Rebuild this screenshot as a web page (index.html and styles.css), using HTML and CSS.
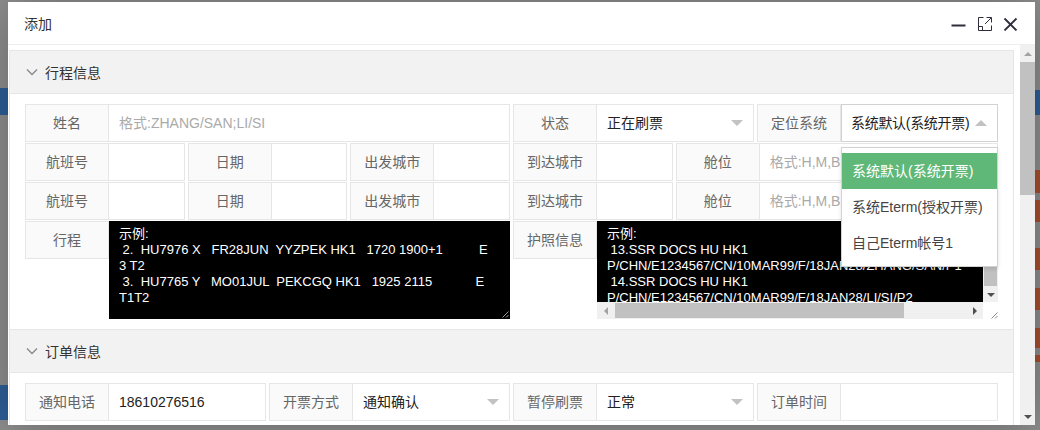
FILE: index.html
```html
<!DOCTYPE html>
<html lang="zh-CN">
<head>
<meta charset="UTF-8">
<title>添加</title>
<link rel="stylesheet" href="styles.css">
</head>
<body>
<!-- dimmed page behind the layer -->
<div class="backdrop">
  <i class="bg-bit blue" style="left:0;top:88px;height:27px"></i>
  <i class="bg-bit blue" style="left:0;top:385px;height:35px"></i>
  <i class="bg-bit blue" style="left:1035px;top:90px;height:25px"></i>
  <i class="bg-bit red" style="left:1035px;top:170px;height:23px"></i>
  <i class="bg-bit red" style="left:1035px;top:200px;height:22px"></i>
  <i class="bg-bit red" style="left:1035px;top:248px;height:22px"></i>
  <i class="bg-bit red" style="left:1035px;top:288px;height:22px"></i>
  <i class="bg-bit red" style="left:1035px;top:328px;height:20px"></i>
  <i class="bg-bit red" style="left:1035px;top:355px;height:7px"></i>
</div>

<div class="layer">
  <div class="layer-title">
    <span class="title-text">添加</span>
    <span class="layer-btns">
      <svg width="15" height="15" viewBox="0 0 15 15"><path d="M0.5 9.5H14.5" stroke="#2e2d3c" stroke-width="2" fill="none"/></svg>
      <svg width="15" height="15" viewBox="0 0 15 15" fill="none" stroke="#2e2d3c" stroke-width="1"><path d="M6.5 1.5H1.5V14.5H14.5V9.5"/><path d="M8 8L14 2M9.5 1.5H14.5V6.5"/><path d="M1.5 10.5H5.5V14.5"/></svg>
      <svg width="15" height="15" viewBox="0 0 15 15"><path d="M1.5 2.5L13.5 14.5M13.5 2.5L1.5 14.5" stroke="#2e2d3c" stroke-width="1.8" fill="none"/></svg>
    </span>
  </div>

  <div class="layer-body">
    <div class="layer-content">
      <div class="collapse">
        <div class="colla-item">
          <h2 class="colla-title"><svg class="chev" width="12" height="8" viewBox="0 0 12 8"><path d="M1 1.5L6 6.5L11 1.5" stroke="#888" stroke-width="1.3" fill="none"/></svg>行程信息</h2>
          <div class="colla-content">
            <div class="form-grid">
              <div class="field span6"><label>姓名</label><div class="input placeholder">格式:ZHANG/SAN;LI/SI</div></div>
              <div class="field span3"><label>状态</label><div class="input select">正在刷票<i class="edge"></i></div></div>
              <div class="field span3"><label>定位系统</label>
                <div class="input select open">系统默认(系统开票)<i class="edge up"></i>
                  <dl class="options">
                    <dd class="this">系统默认(系统开票)</dd>
                    <dd>系统Eterm(授权开票)</dd>
                    <dd>自己Eterm帐号1</dd>
                  </dl>
                </div>
              </div>

              <div class="field span2"><label>航班号</label><div class="input"></div></div>
              <div class="field span2"><label>日期</label><div class="input"></div></div>
              <div class="field span2"><label>出发城市</label><div class="input"></div></div>
              <div class="field span2"><label>到达城市</label><div class="input"></div></div>
              <div class="field span4"><label>舱位</label><div class="input placeholder">格式:H,M,B,Y</div></div>

              <div class="field span2"><label>航班号</label><div class="input"></div></div>
              <div class="field span2"><label>日期</label><div class="input"></div></div>
              <div class="field span2"><label>出发城市</label><div class="input"></div></div>
              <div class="field span2"><label>到达城市</label><div class="input"></div></div>
              <div class="field span4"><label>舱位</label><div class="input placeholder">格式:H,M,B,Y</div></div>

              <div class="field span6 tall"><label>行程</label>
                <div class="textarea">
                  <div class="ta-text">示例:
 2.  HU7976 X   FR28JUN  YYZPEK HK1   1720 1900+1          E
3 T2
 3.  HU7765 Y   MO01JUL  PEKCGQ HK1   1925 2115            E
T1T2</div>
                  <svg class="grip" width="8" height="8" viewBox="0 0 8 8"><path d="M7.5 1.5L1.5 7.5M7.5 5L5 7.5" stroke="#999" stroke-width="1"/></svg>
                </div>
              </div>
              <div class="field span6 tall"><label>护照信息</label>
                <div class="scrollbox">
                  <div class="sb-text">示例:
 13.SSR DOCS HU HK1
P/CHN/E1234567/CN/10MAR99/F/18JAN28/ZHANG/SAN/P1
 14.SSR DOCS HU HK1
P/CHN/E1234567/CN/10MAR99/F/18JAN28/LI/SI/P2</div>
                  <div class="sb-v">
                    <span class="sb-btn"><i class="arr arr-up off"></i></span>
                    <span class="sb-thumb-v"></span>
                    <span class="sb-track"></span>
                    <span class="sb-btn"><i class="arr arr-down"></i></span>
                  </div>
                  <div class="sb-h">
                    <span class="sb-btn"><i class="arr arr-left off"></i></span>
                    <span class="sb-thumb-h"></span>
                    <span class="sb-track"></span>
                    <span class="sb-btn"><i class="arr arr-right"></i></span>
                  </div>
                  <div class="sb-corner"><svg width="9" height="9" viewBox="0 0 9 9"><path d="M8.5 2.5L2.5 8.5M8.5 6L6 8.5" stroke="#888" stroke-width="1"/></svg></div>
                </div>
              </div>
            </div>
          </div>
        </div>

        <div class="colla-item">
          <h2 class="colla-title"><svg class="chev" width="12" height="8" viewBox="0 0 12 8"><path d="M1 1.5L6 6.5L11 1.5" stroke="#888" stroke-width="1.3" fill="none"/></svg>订单信息</h2>
          <div class="colla-content">
            <div class="form-grid">
              <div class="field span3"><label>通知电话</label><div class="input value">18610276516</div></div>
              <div class="field span3"><label>开票方式</label><div class="input select">通知确认<i class="edge"></i></div></div>
              <div class="field span3"><label>暂停刷票</label><div class="input select">正常<i class="edge"></i></div></div>
              <div class="field span3"><label>订单时间</label><div class="input"></div></div>
            </div>
          </div>
        </div>
      </div>
    </div>

    <div class="vscroll">
      <span class="sb-btn tall-btn"><i class="arr arr-up off"></i></span>
      <span class="page-thumb"></span>
      <span class="sb-track"></span>
      <span class="sb-btn tall-btn"><i class="arr arr-down"></i></span>
    </div>
  </div>
</div>
</body>
</html>
```

FILE: styles.css
```css
body {
  margin: 0;
  width: 1040px;
  height: 430px;
  overflow: hidden;
  position: relative;
  background-color: #8f8f8f; /* page under the shade */
  font-family: "Liberation Sans", "Noto Sans CJK SC", sans-serif;
  font-size: 14px;
  color: #333;
}

.backdrop {
  position: absolute;
  left: 0;
  top: 0;
  width: 1040px;
  height: 430px;
}

.bg-bit {
  position: absolute;
  width: 8px;
}

.bg-bit.blue {
  background-color: #2d5f99;
}

.bg-bit.red {
  width: 5px;
  background-color: #a8502f;
}

/* the popup layer */
.layer {
  position: absolute;
  left: 8px;
  top: 2px;
  width: 1027px;
  height: 423px;
  background-color: #fff;
  box-shadow: 1px 1px 50px rgba(0, 0, 0, 0.3);
  display: flex;
  flex-direction: column;
}

.layer-title {
  height: 42px;
  flex: none;
  border-bottom: 1px solid #eee;
  display: flex;
  align-items: center;
  padding: 0 17px 0 16px;
  color: #333;
}

.title-text {
  flex: 1;
}

.layer-btns {
  display: flex;
  align-items: center;
  gap: 11px;
}

.layer-btns svg {
  display: block;
}

.layer-body {
  flex: 1;
  display: flex;
  min-height: 0;
}

.layer-content {
  flex: 1;
  min-width: 0;
  overflow: hidden;
  padding: 5px 6px 0 1px;
}

/* collapse panel */
.collapse {
  border: 1px solid #e6e6e6;
}

.colla-item + .colla-item {
  border-top: 1px solid #e6e6e6;
}

.colla-title {
  margin: 0;
  height: 42px;
  display: flex;
  align-items: center;
  padding-left: 16px;
  background-color: #f2f2f2;
  font-size: 14px;
  font-weight: normal;
  color: #333;
}

.chev {
  margin-right: 7px;
}

.colla-content {
  border-top: 1px solid #e6e6e6;
  padding: 10px 15px;
}

/* form grid */
.form-grid {
  display: grid;
  grid-template-columns: repeat(12, 1fr);
  column-gap: 3px;
  row-gap: 1px;
}

.span2 { grid-column: span 2; }
.span3 { grid-column: span 3; }
.span4 { grid-column: span 4; }
.span6 { grid-column: span 6; }

.field {
  display: flex;
  height: 38px;
  min-width: 0;
}

.field label {
  flex: none;
  width: 84px;
  height: 38px;
  box-sizing: border-box;
  border: 1px solid #e6e6e6;
  background-color: #fafafa;
  color: #666;
  text-align: center;
  line-height: 36px;
}

.field .input {
  flex: 1;
  min-width: 0;
  height: 38px;
  box-sizing: border-box;
  border: 1px solid #e6e6e6;
  border-left: none;
  padding: 0 10px;
  line-height: 36px;
  white-space: nowrap;
  overflow: hidden;
  background-color: #fff;
  color: #222;
}

.field .placeholder {
  color: #aaa;
}

.select {
  display: flex;
  align-items: center;
}

.field .select.open {
  overflow: visible;
  position: relative;
  border-color: #d2d2d2;
  border-left: 1px solid #d2d2d2;
  padding-left: 9px;
  letter-spacing: -0.3px;
}

.edge {
  margin-left: auto;
  flex: none;
  width: 0;
  height: 0;
  border: 6px solid transparent;
  border-top-color: #c2c2c2;
  margin-top: 6px;
}

.edge.up {
  border-top-color: transparent;
  border-bottom-color: #c2c2c2;
  margin-top: -6px;
}

/* open dropdown */
.options {
  position: absolute;
  left: -1px;
  right: -1px;
  top: 42px;
  margin: 0;
  padding: 5px 0;
  background-color: #fff;
  border: 1px solid #d2d2d2;
  box-shadow: 0 2px 4px rgba(0, 0, 0, 0.12);
  z-index: 10;
  letter-spacing: 0;
}

.options dd {
  margin: 0;
  padding: 0 10px;
  line-height: 36px;
  color: #444;
}

.options dd.this {
  background-color: #5fb878;
  color: #fff;
}

/* textareas */
.field.tall {
  height: 98px;
  align-items: flex-start;
}

.textarea {
  flex: 1;
  height: 98px;
  background-color: #000;
  display: grid;
}

.ta-text,
.sb-text {
  font-family: "Liberation Sans", "Noto Sans CJK SC", sans-serif;
  font-size: 13px;
  line-height: 16px;
  color: #fff;
  white-space: pre;
  overflow: hidden;
  padding: 5px 10px 0 10px;
}

.ta-text {
  grid-area: 1 / 1;
}

.grip {
  grid-area: 1 / 1;
  align-self: end;
  justify-self: end;
  margin: 0 1px 1px 0;
}

.scrollbox {
  flex: 1;
  height: 98px;
  display: grid;
  grid-template-columns: 1fr 15px;
  grid-template-rows: 1fr 17px;
  background-color: #f0f0f0;
}

.sb-text {
  background-color: #000;
  min-width: 0;
}

.sb-v {
  display: flex;
  flex-direction: column;
}

.sb-h {
  display: flex;
}

.sb-btn {
  flex: none;
  width: 15px;
  height: 15px;
  display: flex;
  align-items: center;
  justify-content: center;
}

.sb-h .sb-btn {
  width: 17px;
  height: 17px;
}

.sb-track {
  flex: 1;
}

.sb-thumb-v {
  height: 50px;
  background-color: #c1c1c1;
  margin: 0 1px;
}

.sb-thumb-h {
  width: 289px;
  background-color: #c1c1c1;
  margin: 1px 0 1px 1px;
}

.sb-corner {
  display: flex;
  align-items: flex-end;
  justify-content: flex-end;
  background-color: #fff;
}

/* little scrollbar arrows */
.arr {
  width: 0;
  height: 0;
  border: 4px solid transparent;
}

.arr-up { border-bottom-color: #505050; margin-top: -4px; }
.arr-down { border-top-color: #505050; margin-top: 4px; }
.arr-left { border-right-color: #505050; margin-left: -4px; }
.arr-right { border-left-color: #505050; margin-left: 4px; }

.arr-up.off { border-bottom-color: #a3a3a3; }
.arr-left.off { border-right-color: #a3a3a3; }

/* layer scrollbar */
.vscroll {
  flex: none;
  width: 15px;
  display: flex;
  flex-direction: column;
  background-color: #f0f0f0;
}

.vscroll .tall-btn {
  height: 17px;
}

.page-thumb {
  height: 133px;
  background-color: #c1c1c1;
}
```
